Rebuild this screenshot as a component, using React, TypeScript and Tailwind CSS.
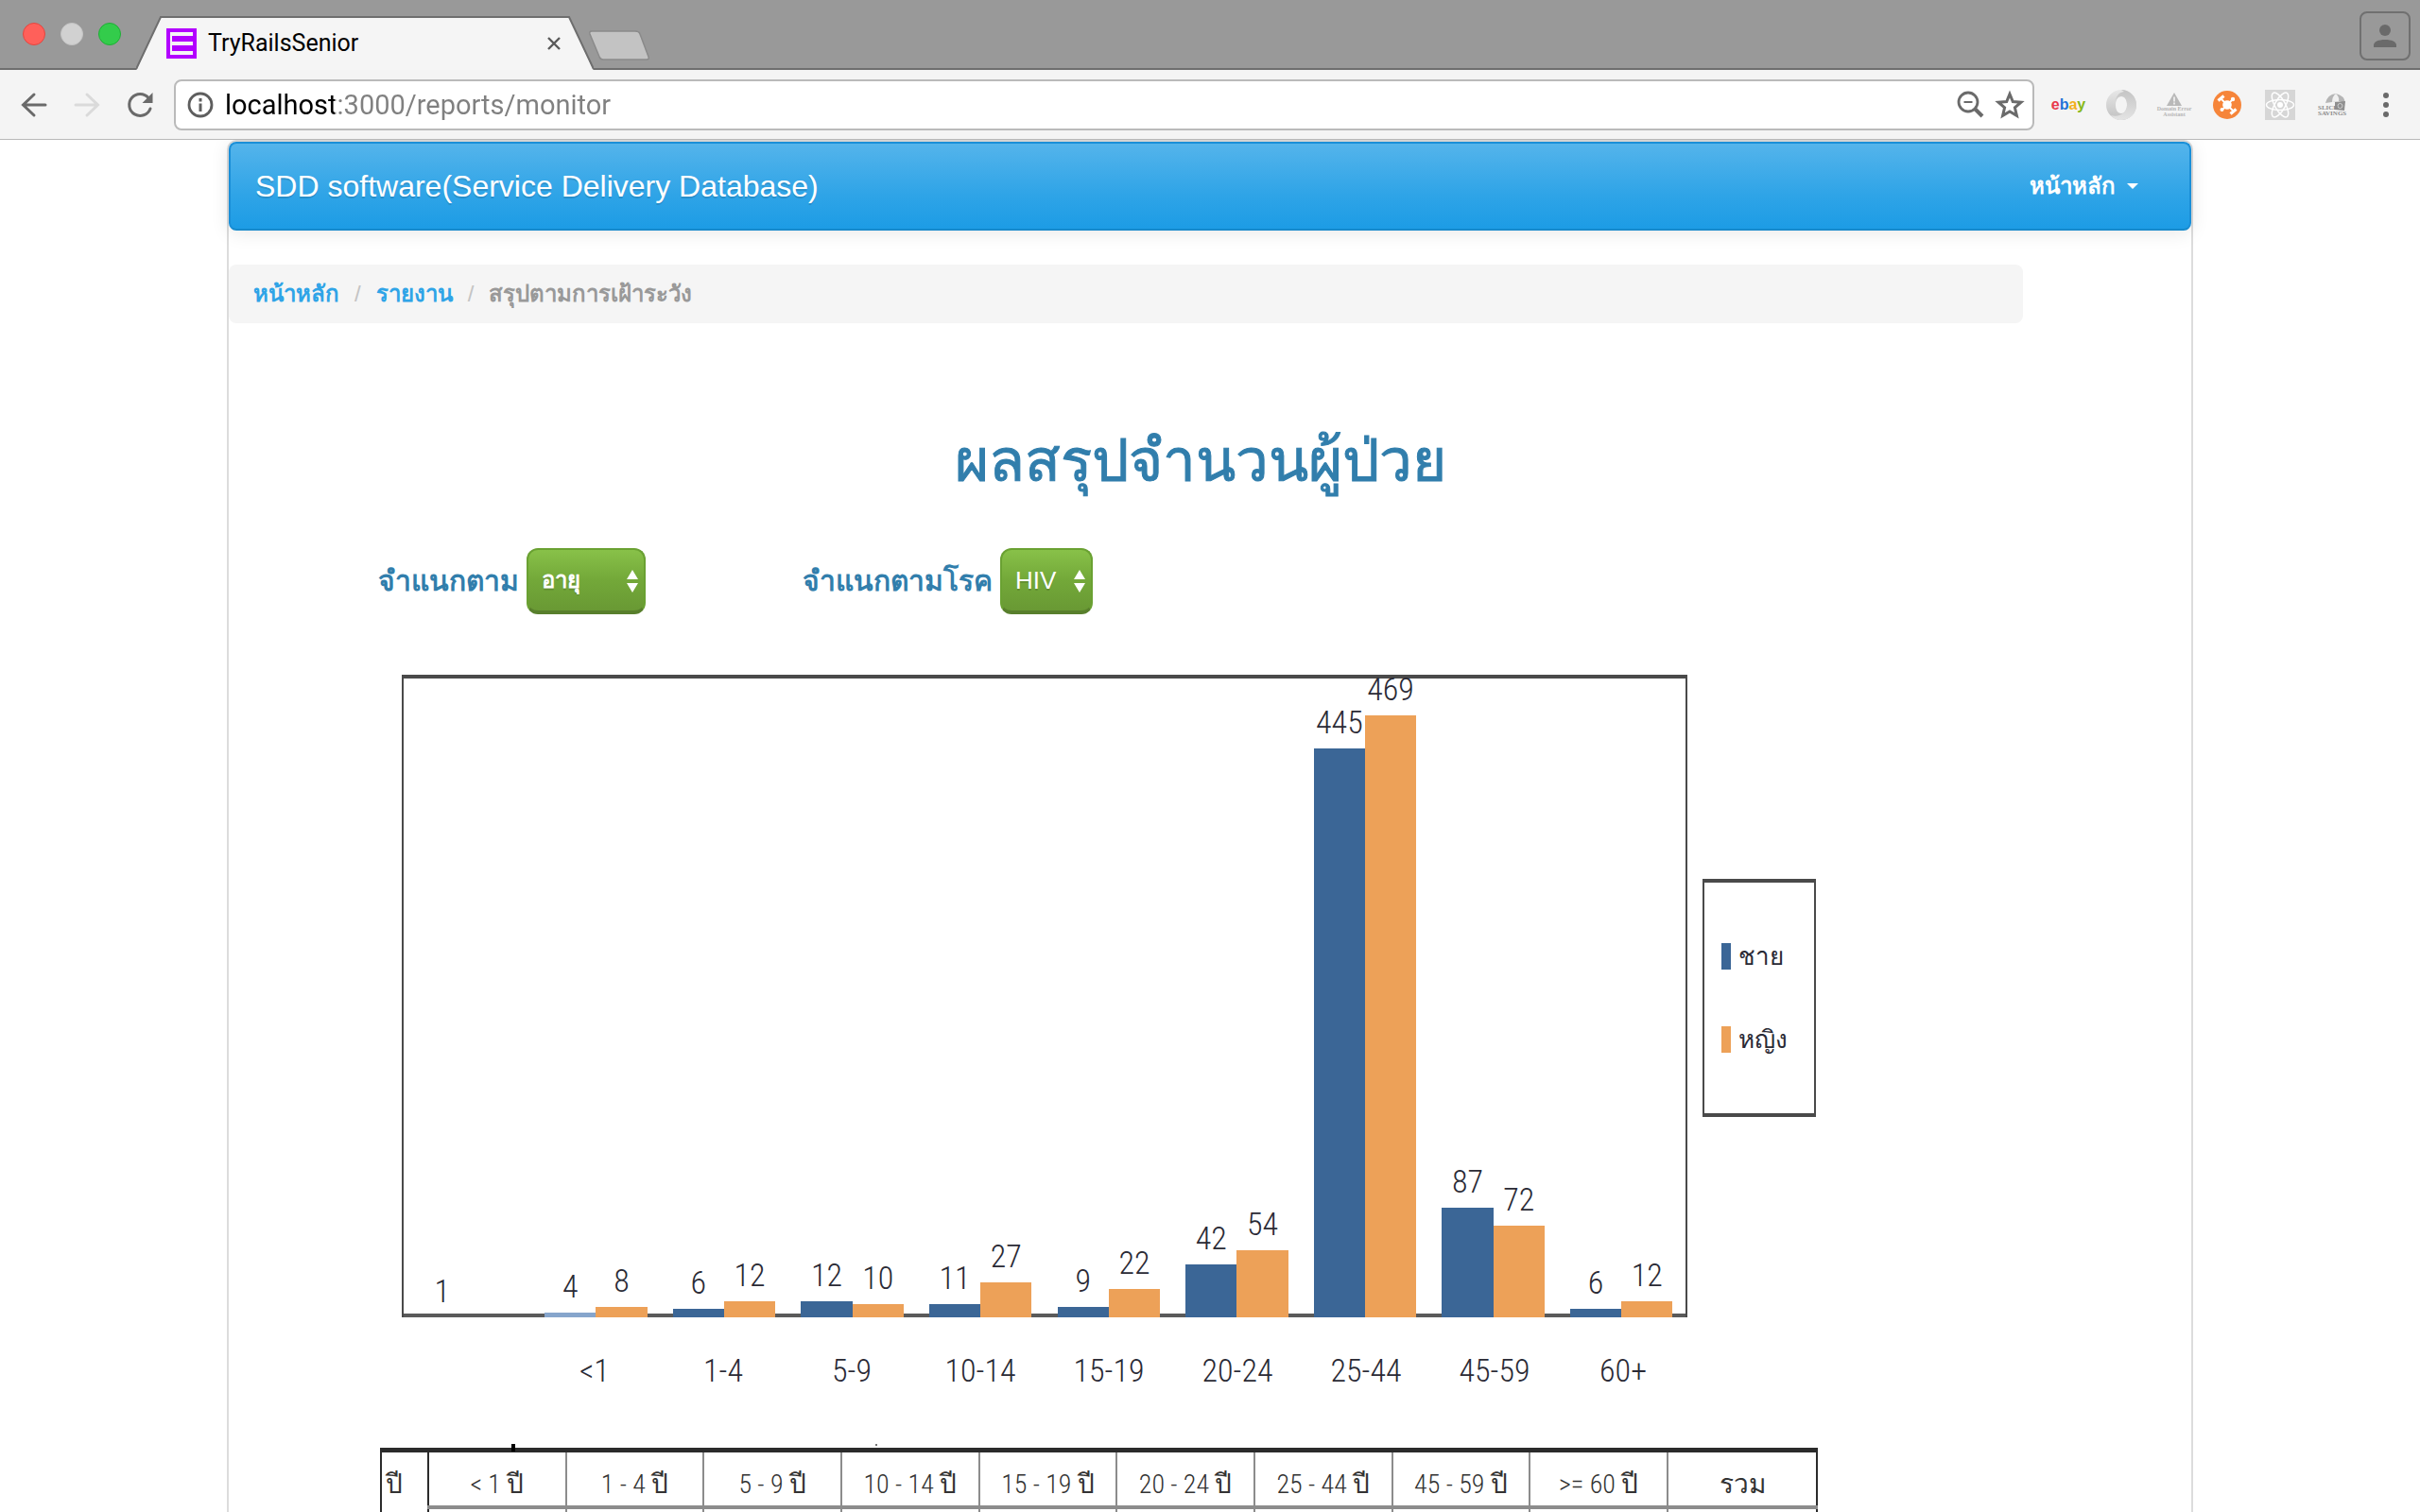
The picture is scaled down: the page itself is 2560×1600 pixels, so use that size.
import React from "react";

const bars: { label: string; male: number | null; maleH: number; female: number | null; femaleH: number }[] = [
  { label: "", male: 1, maleH: 0, female: null, femaleH: 0 },
  { label: "<1", male: 4, maleH: 5, female: 8, femaleH: 11 },
  { label: "1-4", male: 6, maleH: 9, female: 12, femaleH: 17 },
  { label: "5-9", male: 12, maleH: 17, female: 10, femaleH: 14 },
  { label: "10-14", male: 11, maleH: 14, female: 27, femaleH: 37 },
  { label: "15-19", male: 9, maleH: 11, female: 22, femaleH: 30 },
  { label: "20-24", male: 42, maleH: 56, female: 54, femaleH: 71 },
  { label: "25-44", male: 445, maleH: 602, female: 469, femaleH: 637 },
  { label: "45-59", male: 87, maleH: 116, female: 72, femaleH: 97 },
  { label: "60+", male: 6, maleH: 9, female: 12, femaleH: 17 },
];

const ages = ["< 1 ปี", "1 - 4 ปี", "5 - 9 ปี", "10 - 14 ปี", "15 - 19 ปี", "20 - 24 ปี", "25 - 44 ปี", "45 - 59 ปี", ">= 60 ปี"];

function TabStrip() {
  return (
    <div className="flex h-[74px] items-end border-b-2 border-[#6e6e6e] bg-[#999999]">
      <div className="flex h-full items-center gap-4 pl-6">
        <button aria-label="Close" className="size-6 rounded-full border border-[#e2463f] bg-[#ff605a]" />
        <button aria-label="Minimize" className="size-6 rounded-full border border-[#c4c4c4] bg-[#d1d1d1]" />
        <button aria-label="Zoom" className="size-6 rounded-full border border-[#1fae36] bg-[#33cc4b]" />
      </div>
      <div className="relative -mb-0.5 ml-4 flex h-[57px] w-[484px] items-center pr-[34px] pl-8">
        <svg className="absolute inset-0 size-full" viewBox="0 0 484 57" preserveAspectRatio="none" aria-hidden="true">
          <path d="M0 57 L1 56 L26 1 H458 L483 56 L484 57Z" fill="#f5f5f5" />
          <path d="M0 56 L26 1 H458 L484 56" fill="none" stroke="#6e6e6e" strokeWidth="2" />
        </svg>
        <svg className="relative size-8" viewBox="0 0 32 32" aria-hidden="true">
          <rect width="32" height="32" fill="#b200ff" />
          <path d="M4 4h24v4H6v6h22v4H6v6h22v4H4z" fill="#f5f5f5" />
          <path d="M6 8h22v6H6zM6 18h22v6H6z" fill="#b200ff" />
        </svg>
        <span className="relative ml-3 flex-1 font-['Roboto',sans-serif] text-[25px] leading-8 text-black">TryRailsSenior</span>
        <button aria-label="Close tab" className="relative">
          <svg className="size-4" viewBox="0 0 16 16"><path d="M2 2l12 12M14 2L2 14" stroke="#5a5a5a" strokeWidth="2.4" /></svg>
        </button>
      </div>
      <button aria-label="New tab" className="mb-2 -ml-1.5">
        <svg className="h-8 w-[66px]" viewBox="0 0 66 32">
          <path d="M4 1H50q4 0 5 3l9 24q1 3-2 3H16q-3 0-4-3L2 4Q1 1 4 1z" fill="#c3c3c3" stroke="#8a8a8a" strokeWidth="1.5" />
        </svg>
      </button>
      <button aria-label="Profile" className="mr-2.5 mb-2 ml-auto flex h-[52px] w-[54px] items-center justify-center rounded-lg border-2 border-[#707070]">
        <svg className="size-6" viewBox="0 0 24 24"><circle cx="12" cy="6" r="6" fill="#6a6a6a" /><path d="M0 24v-2c0-4 5-6 12-6s12 2 12 6v2z" fill="#6a6a6a" /><path d="M0 24.5h24" stroke="#d0d0d0" /></svg>
      </button>
    </div>
  );
}

function Extensions() {
  return (
    <div className="flex items-center gap-6 pl-5">
      <button aria-label="ebay" className="flex w-8 justify-center font-['Liberation_Sans',sans-serif] text-[16px] leading-8 font-bold">
        <span className="text-[#e8394a]">e</span><span className="text-[#1e74d8]">b</span><span className="text-[#f2b01e]">a</span><span className="text-[#86b817]">y</span>
      </button>
      <button aria-label="JSON view">
        <svg className="size-8" viewBox="0 0 32 32">
          <defs>
            <linearGradient id="ringA" x1="0" y1="0" x2="0" y2="1"><stop offset="0" stopColor="#c4c4c4" /><stop offset="1" stopColor="#e4e4e4" /></linearGradient>
            <linearGradient id="ringB" x1="0" y1="1" x2="0" y2="0"><stop offset="0" stopColor="#c0c0c0" /><stop offset="1" stopColor="#e8e8e8" /></linearGradient>
          </defs>
          <path fillRule="evenodd" d="M16 0a16 16 0 1 0 0 32 16 16 0 1 0 0-32zM16 7c4 0 6 4 6 9s-2 9-6 9-6-4-6-9 2-9 6-9z" fill="url(#ringB)" />
          <path d="M16 0c9 0 16 7 16 16s-7 16-16 16c-5 0-9-2-11-5 9 3 17-3 17-11 0-5-2-9-6-9-3 0-5 2-6 6 0-6 3-10 9-11z" fill="url(#ringA)" />
        </svg>
      </button>
      <button aria-label="Domain Error Assistant" className="flex w-8 flex-col items-center font-['Liberation_Serif',serif] text-[6px] leading-[6px] font-bold whitespace-nowrap text-[#b4b4b4]">
        <svg className="h-3.5 w-4" viewBox="0 0 16 14"><path d="M8 0l8 14H0z" fill="#b9b9b9" /><path d="M8 4.500v5M8 10.500v2" stroke="#f4f4f4" strokeWidth="1.600" /></svg>
        <span>Domain Error</span>
        <span>Assistant</span>
      </button>
      <button aria-label="Hub">
        <svg className="size-8" viewBox="0 0 32 32">
          <circle cx="16" cy="16" r="15" fill="#f6853a" />
          <g stroke="#fff" strokeWidth="1.800"><path d="M9 9l14 14M22 10L10 22" /></g>
          <circle cx="16" cy="16" r="4.800" fill="#fff" />
          <circle cx="22" cy="10" r="2.200" fill="#fff" /><circle cx="10.500" cy="21" r="2" fill="#fff" />
          <path d="M6.500 11.500l6-5M19.500 25.500l6-5" stroke="#fff" strokeWidth="3.200" />
        </svg>
      </button>
      <button aria-label="React tools">
        <svg className="size-8" viewBox="0 0 32 32">
          <rect width="32" height="32" fill="#d6d6d6" />
          <g fill="none" stroke="#fff" strokeWidth="1.500">
            <ellipse cx="16" cy="16" rx="14.500" ry="5.500" />
            <ellipse cx="16" cy="16" rx="14.500" ry="5.500" transform="rotate(60 16 16)" />
            <ellipse cx="16" cy="16" rx="14.500" ry="5.500" transform="rotate(120 16 16)" />
          </g>
          <circle cx="16" cy="16" r="3" fill="#fff" />
        </svg>
      </button>
      <button aria-label="Slick Savings" className="flex w-8 flex-col items-start font-['Liberation_Serif',serif] text-[7px] leading-[6px] font-bold text-[#8c8c8c]">
        <svg className="-mb-1.5 h-[18px] w-8" viewBox="0 0 32 18">
          <path d="M8 10Q10 1 19 0q9 2 10 10l-7-2-7 1z" fill="#b5b5b5" />
          <path d="M15 9q0-6 4-9 4 4 3 8z" fill="#f0f0f0" />
          <path d="M18 9l11-1-1 10-10-1z" fill="#8f8f8f" /><circle cx="23.500" cy="13" r="2.500" fill="none" stroke="#d0d0d0" />
        </svg>
        <span>SLICK</span>
        <span>SAVINGS</span>
      </button>
      <button aria-label="Menu" className="flex w-8 flex-col items-center gap-1">
        <span className="size-1.5 rounded-full bg-[#6a6a6a]" />
        <span className="size-1.5 rounded-full bg-[#6a6a6a]" />
        <span className="size-1.5 rounded-full bg-[#6a6a6a]" />
      </button>
    </div>
  );
}

function Toolbar() {
  return (
    <div className="flex h-[74px] items-center border-b border-[#b9b9b9] bg-[#f4f4f4] pr-5 pl-5">
      <div className="flex items-center gap-6">
        <button aria-label="Back">
          <svg className="size-8" viewBox="0 0 32 32" fill="none" stroke="#6a6a6a" strokeWidth="3" strokeLinecap="round"><path d="M28 16H5M16 5L4.500 16 16 27" /></svg>
        </button>
        <button aria-label="Forward">
          <svg className="size-8" viewBox="0 0 32 32" fill="none" stroke="#dadada" strokeWidth="3" strokeLinecap="round"><path d="M4 16h23M16 5l11.500 11L16 27" /></svg>
        </button>
        <button aria-label="Reload">
          <svg className="size-8" viewBox="0 0 32 32"><path d="M25 8.500A11.500 11.500 0 1 0 27 20" fill="none" stroke="#6a6a6a" strokeWidth="3" strokeLinecap="round" /><path d="M29.500 3v11h-11z" fill="#6a6a6a" /></svg>
        </button>
      </div>
      <div className="ml-5 flex h-[54px] flex-1 items-center rounded-lg border-2 border-[#bababa] bg-white pr-2 pl-3">
        <svg className="size-7" viewBox="0 0 28 28" aria-hidden="true"><circle cx="14" cy="14" r="12" fill="none" stroke="#5e5e5e" strokeWidth="2.800" /><path d="M14 7v3.500M14 12.500V21" stroke="#5e5e5e" strokeWidth="3" /></svg>
        <input
          aria-label="Address"
          readOnly
          value="localhost:3000/reports/monitor"
          className="ml-3 min-w-0 flex-1 bg-[linear-gradient(to_right,#000_116px,#808080_116px)] bg-clip-text font-['Roboto',sans-serif] text-[29px] leading-9 text-transparent outline-none"
        />
        <button aria-label="Zoom level">
          <svg className="size-8" viewBox="0 0 32 32" fill="none" stroke="#6a6a6a"><circle cx="14" cy="13" r="10" strokeWidth="2.800" /><path d="M9.500 13h9" strokeWidth="2" /><path d="M21 20l8 8" strokeWidth="4" /></svg>
        </button>
        <button aria-label="Bookmark" className="ml-2.5">
          <svg className="size-8" viewBox="0 0 32 32"><path d="M16 4.500l3.300 8 8.700.7-6.600 5.700 2 8.500L16 22.900l-7.400 4.500 2-8.500L4 13.200l8.700-.7z" fill="none" stroke="#6a6a6a" strokeWidth="3" /></svg>
        </button>
      </div>
      <Extensions />
    </div>
  );
}

function GreenSelect({ id, value, className }: { id: string; value: string; className: string }) {
  return (
    <span className={"relative inline-block " + className}>
      <select
        id={id}
        defaultValue={value}
        className="h-[70px] w-full appearance-none rounded-xl border-2 border-b-4 border-[#6aa132] border-b-[#587f2c] bg-linear-to-b from-[#88c149] via-[#73a839] to-[#699934] pl-3.5 leading-8 text-white outline-none [text-shadow:0_2px_0_rgba(0,0,0,0.15)]"
      >
        <option>{value}</option>
      </select>
      <svg className="pointer-events-none absolute top-[23px] right-2 h-6 w-3" viewBox="0 0 12 24" aria-hidden="true"><path d="M6 0l6 10H0zM6 24l6-10H0z" fill="#fff" /></svg>
    </span>
  );
}

function Bar({ value, height, color }: { value: number | null; height: number; color: string }) {
  return (
    <div className="flex w-[40%] flex-col items-center">
      <span className="mb-3 leading-8">{value}</span>
      <div className={"w-full " + color} style={{ height }} />
    </div>
  );
}

function Chart() {
  return (
    <div className="mr-0.5 ml-[23px] flex items-center gap-4 font-['Roboto_Condensed','Liberation_Sans',sans-serif] text-[34px] font-light text-[#2a2a35]">
      <div className="flex-1">
        <div className="relative grid h-[680px] grid-cols-10 border-x-2 border-t-4 border-[#4a4a4a]">
          <div className="absolute inset-x-0 bottom-0 h-1 bg-[#5a5a5a]" />
          {bars.map((b) => (
            <div key={b.label} className="relative flex h-[676px] items-end justify-center">
              <Bar value={b.male} height={b.maleH} color={b.male === 4 ? "bg-[#86a5cc]" : "bg-[#3b6696]"} />
              <Bar value={b.female} height={b.femaleH} color="bg-[#eda158]" />
            </div>
          ))}
        </div>
        <div className="mt-9 grid grid-cols-10 text-center leading-10">
          {bars.map((b) => (
            <span key={b.label}>{b.label}</span>
          ))}
        </div>
      </div>
      <div className="-mt-[72px] flex h-[252px] w-[120px] flex-col justify-center gap-12 border-x-2 border-y-4 border-[#4a4a4a] pl-[18px] text-[26px] leading-10 font-normal">
        <div className="flex items-center gap-2"><span className="h-7 w-2.5 bg-[#3b6696]" />ชาย</div>
        <div className="flex items-center gap-2"><span className="h-7 w-2.5 bg-[#eda158]" />หญิง</div>
      </div>
    </div>
  );
}

function AgeTable() {
  return (
    <div className="relative">
      <span className="absolute -top-1 left-[139px] h-2 w-1 bg-black" />
      <span className="absolute -top-1 left-[524px] h-0.5 w-0.5 bg-[#777]" />
      <table className="w-full table-fixed border-collapse border-2 border-t-[5px] border-[#2b2b2b] font-['Roboto_Condensed','Liberation_Sans',sans-serif] text-[28px] leading-9 text-[#333]">
        <tbody>
          <tr className="h-[60px]">
            <th rowSpan={2} className="w-[50px] border-r-2 border-[#2b2b2b] pt-4 pl-1 text-left align-top font-normal">ปี</th>
            {ages.map((a) => (
              <th key={a} className="border-x-2 border-b-4 border-[#8c8c8c] pt-3 font-light">{a}</th>
            ))}
            <th className="w-[158px] border-b-4 border-l-2 border-b-[#8c8c8c] border-l-[#2b2b2b] pt-3 font-normal">รวม</th>
          </tr>
          <tr className="h-[60px]">
            {ages.map((a) => (
              <td key={a} className="border-x-2 border-[#8c8c8c]" />
            ))}
            <td />
          </tr>
        </tbody>
      </table>
    </div>
  );
}

export default function App() {
  return (
    <div className="flex h-screen flex-col overflow-hidden bg-white font-['Liberation_Sans',sans-serif]">
      <TabStrip />
      <Toolbar />
      <main className="min-h-0 flex-1 overflow-hidden">
        <div className="mx-60 rounded-t-[10px] border-2 border-b-0 border-[#dcdcdc]">
          <nav className="flex h-[94px] items-center justify-between rounded-lg border-2 border-[#1a8fd8] border-b-[#178acc] bg-[linear-gradient(#54b4eb,#2fa4e7_60%,#1d9ce5)] pr-[54px] pl-[26px] text-white shadow-[0_2px_20px_rgba(0,0,0,0.1)] [text-shadow:0_2px_0_rgba(0,0,0,0.12)]">
            <a href="#" className="text-[32px] leading-10">SDD software(Service Delivery Database)</a>
            <button className="flex items-center gap-3 text-[24px] leading-9 font-bold">
              หน้าหลัก
              <svg className="h-1.5 w-3" viewBox="0 0 12 6" aria-hidden="true"><path d="M0 0h12L6 6z" fill="#fff" /></svg>
            </button>
          </nav>
          <ol className="mt-9 mr-[178px] flex h-[62px] items-center gap-4 rounded-lg bg-[#f5f5f5] pl-[26px] text-[24px] leading-9 font-bold">
            <li><a href="#" className="text-[#2fa4e7]">หน้าหลัก</a></li>
            <li className="font-normal text-[#c4c4c4]">/</li>
            <li><a href="#" className="text-[#2fa4e7]">รายงาน</a></li>
            <li className="font-normal text-[#c4c4c4]">/</li>
            <li className="text-[#999999]">สรุปตามการเฝ้าระวัง</li>
          </ol>
          <section className="mr-[395px] ml-40 text-[#317eac]">
            <h1 className="mt-[90px] ml-[215px] text-center text-[62px] leading-[112px] [-webkit-text-stroke:1px]">ผลสรุปจำนวนผู้ป่วย</h1>
            <div className="mt-9 -ml-0.5 flex items-center text-[30px] leading-10 font-bold">
              <label htmlFor="age" className="mr-2">จำแนกตาม</label>
              <GreenSelect id="age" value="อายุ" className="w-[126px] text-[24px] font-bold" />
              <label htmlFor="disease" className="mr-2 ml-[166px]">จำแนกตามโรค</label>
              <GreenSelect id="disease" value="HIV" className="w-[98px] text-[26px] font-normal" />
            </div>
            <div className="mt-16">
              <Chart />
            </div>
            <div className="mt-[62px]">
              <AgeTable />
            </div>
          </section>
        </div>
      </main>
    </div>
  );
}
